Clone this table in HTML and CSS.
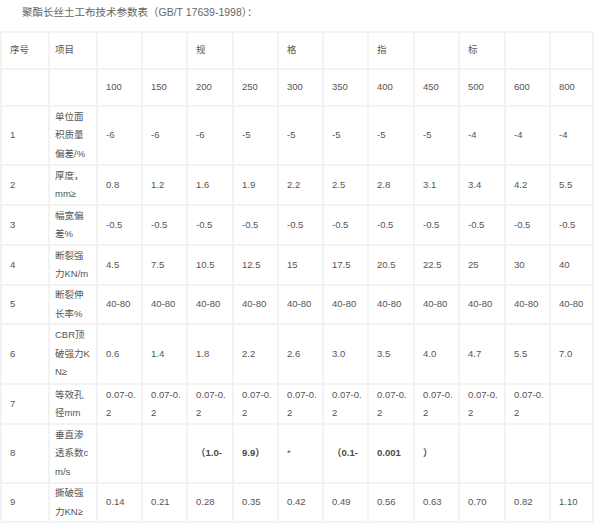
FILE: index.html
```html
<!DOCTYPE html>
<html lang="zh">
<head>
<meta charset="utf-8">
<title>聚酯长丝土工布技术参数表</title>
<link rel="stylesheet" href="styles.css">
</head>
<body>
<p class="title">聚酯长丝土工布技术参数表（GB/T 17639-1998）：</p>
<table class="spec">
  <colgroup>
    <col class="c48"><col class="c48">
    <col class="c45"><col class="c45"><col class="c46"><col class="c45"><col class="c45">
    <col class="c45"><col class="c46"><col class="c45"><col class="c46"><col class="c45"><col class="c43">
  </colgroup>
  <tr class="h37">
    <td>序号</td><td class="item">项目</td><td></td><td></td><td>规</td><td></td><td>格</td><td></td><td>指</td><td></td><td>标</td><td></td><td></td>
  </tr>
  <tr class="h37">
    <td></td><td class="item"></td><td>100</td><td>150</td><td>200</td><td>250</td><td>300</td><td>350</td><td>400</td><td>450</td><td>500</td><td>600</td><td>800</td>
  </tr>
  <tr class="h59">
    <td>1</td><td class="item">单位面<br>积质量<br>偏差/%</td><td>-6</td><td>-6</td><td>-6</td><td>-5</td><td>-5</td><td>-5</td><td>-5</td><td>-5</td><td>-4</td><td>-4</td><td>-4</td>
  </tr>
  <tr class="h40">
    <td>2</td><td class="item">厚度，<br>mm≥</td><td>0.8</td><td>1.2</td><td>1.6</td><td>1.9</td><td>2.2</td><td>2.5</td><td>2.8</td><td>3.1</td><td>3.4</td><td>4.2</td><td>5.5</td>
  </tr>
  <tr class="h40">
    <td>3</td><td class="item">幅宽偏<br>差%</td><td>-0.5</td><td>-0.5</td><td>-0.5</td><td>-0.5</td><td>-0.5</td><td>-0.5</td><td>-0.5</td><td>-0.5</td><td>-0.5</td><td>-0.5</td><td>-0.5</td>
  </tr>
  <tr class="h40">
    <td>4</td><td class="item">断裂强<br>力KN/m</td><td>4.5</td><td>7.5</td><td>10.5</td><td>12.5</td><td>15</td><td>17.5</td><td>20.5</td><td>22.5</td><td>25</td><td>30</td><td>40</td>
  </tr>
  <tr class="h39">
    <td>5</td><td class="item">断裂伸<br>长率%</td><td>40-80</td><td>40-80</td><td>40-80</td><td>40-80</td><td>40-80</td><td>40-80</td><td>40-80</td><td>40-80</td><td>40-80</td><td>40-80</td><td>40-80</td>
  </tr>
  <tr class="h60">
    <td>6</td><td class="item">CBR顶<br>破强力K<br>N≥</td><td>0.6</td><td>1.4</td><td>1.8</td><td>2.2</td><td>2.6</td><td>3.0</td><td>3.5</td><td>4.0</td><td>4.7</td><td>5.5</td><td>7.0</td>
  </tr>
  <tr class="h40">
    <td>7</td><td class="item">等效孔<br>径mm</td><td>0.07-0.<br>2</td><td>0.07-0.<br>2</td><td>0.07-0.<br>2</td><td>0.07-0.<br>2</td><td>0.07-0.<br>2</td><td>0.07-0.<br>2</td><td>0.07-0.<br>2</td><td>0.07-0.<br>2</td><td>0.07-0.<br>2</td><td>0.07-0.<br>2</td><td></td>
  </tr>
  <tr class="h59">
    <td>8</td><td class="item">垂直渗<br>透系数c<br>m/s</td><td></td><td></td><td class="strong">（1.0-</td><td class="strong">9.9）</td><td>*</td><td class="strong">（0.1-</td><td class="strong">0.001</td><td class="strong">）</td><td></td><td></td><td></td>
  </tr>
  <tr class="h38">
    <td>9</td><td class="item">撕破强<br>力KN≥</td><td>0.14</td><td>0.21</td><td>0.28</td><td>0.35</td><td>0.42</td><td>0.49</td><td>0.56</td><td>0.63</td><td>0.70</td><td>0.82</td><td>1.10</td>
  </tr>
</table>
</body>
</html>
```

FILE: styles.css
```css
html, body {
  margin: 0;
  padding: 0;
  background: #ffffff;
}

body {
  font-family: "Liberation Sans", "Noto Sans CJK SC", sans-serif;
  color: #555555;
}

.title {
  margin: 0;
  padding: 4px 0 0 22px;
  height: 27px;
  line-height: 16px;
  font-size: 10.5px;
  color: #666666;
}

.spec {
  border-collapse: collapse;
  table-layout: fixed;
  width: 592px;
  font-size: 9.5px;
}

.c48 { width: 48px; }
.c46 { width: 46px; }
.c45 { width: 45px; }
.c43 { width: 43px; }

.spec td {
  border: 2px solid #f3f3f3;
  padding: 0 2px 0 8px;
  line-height: 18.5px;
  vertical-align: middle;
  white-space: nowrap;
  overflow: hidden;
}

.spec td.item {
  padding-left: 5px;
}

.spec td.strong {
  font-weight: bold;
  color: #4a4a4a;
}

.h37 { height: 37px; }
.h38 { height: 38px; }
.h39 { height: 39px; }
.h40 { height: 40px; }
.h59 { height: 59px; }
.h60 { height: 60px; }
```
